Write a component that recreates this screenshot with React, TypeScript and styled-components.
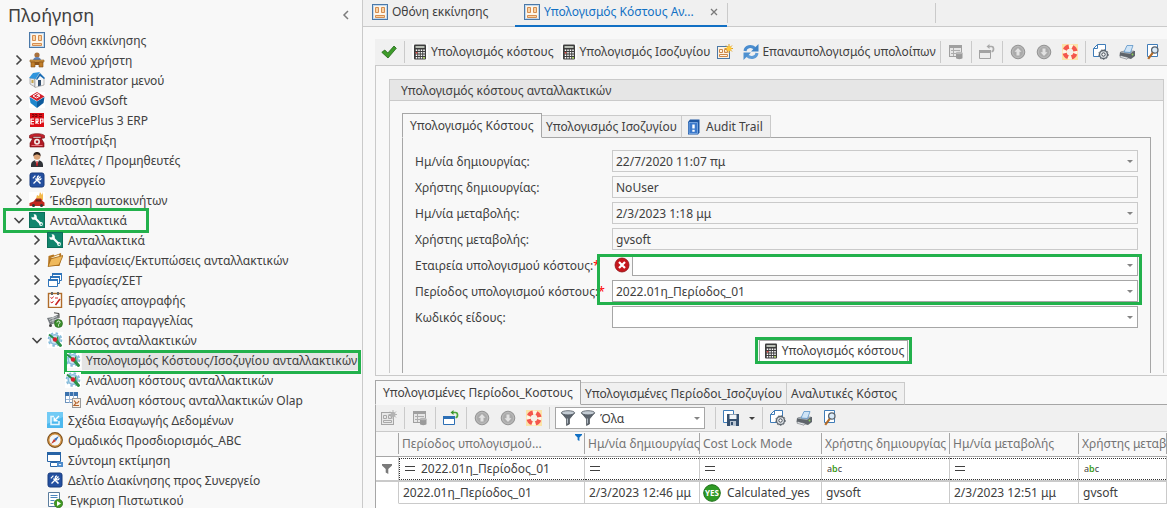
import React, { ReactNode } from "react";
import styled, { createGlobalStyle, css } from "styled-components";

const GREEN = "#22b14c";
const LINE = "#cacaca";
const DARK_LINE = "#a6a6a6";

const GlobalStyle = createGlobalStyle`
  * { box-sizing: border-box; }
  html, body, #root { height: 100%; }
  body {
    margin: 0;
    overflow: hidden;
    background: #f8f8f8;
    color: #404040;
    font-family: "Noto Sans", "Open Sans", sans-serif;
    font-size: 12px;
    line-height: 20px;
  }
  button, input, select { font: inherit; color: inherit; }
  svg { display: block; flex: none; }
`;

/* ---------- icons ---------- */

const Svg = ({ children, size = 16 }: { children: ReactNode; size?: number }) => (
  <svg width={size} height={size} viewBox="0 0 16 16" aria-hidden="true">
    {children}
  </svg>
);

const HomeScreenIcon = () => (
  <Svg>
    <rect x="0.5" y="0.5" width="15" height="15" fill="#fdf6ea" stroke="#4a78a8" />
    <rect x="1.5" y="1.5" width="13" height="13" fill="none" stroke="#c3d8ec" />
    <path d="M3.500 3.500h3v5h-3zM9.500 3.500h3v5h-3zM3.500 11.500h9v2h-9z" fill="#f9d3a4" stroke="#d58d51" />
  </Svg>
);
const DeskIcon = () => (
  <Svg>
    <circle cx="8" cy="3" r="2.6" fill="#a8703c" />
    <path d="M4 9c0-3 2-4 4-4s4 1 4 4z" fill="#5c82ba" />
    <path d="M1 8h14v2H1z" fill="#d79a45" stroke="#8c5a1c" strokeWidth=".6" />
    <path d="M2 10h4v5H2zM10 10h4v5h-4z" fill="#c07d28" stroke="#7d4c12" strokeWidth=".6" />
    <path d="M6 10h4v3H6z" fill="#8c5418" />
  </Svg>
);
const HouseIcon = () => (
  <Svg>
    <path d="M1 6l5 1v8l-5-3z" fill="#e6e6e6" stroke="#777" strokeWidth=".5" />
    <path d="M6 7l4-5 5 4v7l-9 2.500z" fill="#f7f7f7" stroke="#777" strokeWidth=".5" />
    <path d="M0 6l4-5 7-1-4.500 7z" fill="#2f95dd" />
    <path d="M7 7l4-6 5 5-1 1-4-3-3 4z" fill="#1a6cb5" />
    <path d="M9 8h3v5.500l-3 .8z" fill="#35506e" />
    <path d="M2.500 8h2v3h-2z" fill="#c8a64b" />
  </Svg>
);
const CubeIcon = () => (
  <Svg>
    <path d="M0 0h16v16H0z" fill="#fff" />
    <path d="M8 0l7.500 4.500L8 9 .5 4.500z" fill="#d3202c" />
    <path d="M.5 5L8 9.500V16L1.500 11z" fill="#1f86cc" />
    <path d="M15.500 5L8 9.500V16l6.500-5z" fill="#0e5b9c" />
    <path d="M10.500 2.800L8 1.500 4 4l3.500 2L11 4 9 3.200 7.500 4" fill="none" stroke="#fff" />
  </Svg>
);
const ErpIcon = () => (
  <Svg>
    <rect x="1" y="1" width="14" height="14" fill="#dc0d15" />
    <path d="M3 2.500h2v2H3M6 2.500h2v2H6M10 2.500h3M10 4.500h3" stroke="#7b0509" fill="none" />
    <path d="M5 7H2v5h3M2 9.500h3M7 12V7h2v2.500H7.500L9.500 12M11.500 12V7h2.500v3h-2" stroke="#fff" fill="none" strokeWidth="1.200" />
  </Svg>
);
const PhoneIcon = () => (
  <Svg>
    <path d="M.5 6V3.500C3 1 13 1 15.500 3.500V6l-3.500.5V4.500H4v2z" fill="#c3202b" stroke="#6e0d13" strokeWidth=".6" />
    <path d="M4 6h8l3 5v4H1v-4z" fill="#b01a24" stroke="#6e0d13" strokeWidth=".6" />
    <circle cx="8" cy="9.800" r="3" fill="#f4e7e4" />
    <circle cx="8" cy="9.800" r="1.300" fill="#9c1720" />
    <path d="M2.500 13.500h11" stroke="#e8757c" />
  </Svg>
);
const PersonIcon = () => (
  <Svg>
    <path d="M2 15c-.5-5 2-7 6-7s6.500 2 6 7z" fill="#2f3338" />
    <path d="M6 8l2 5 2-5z" fill="#fff" />
    <path d="M7.500 9h1l.6 4-1.100 1.500L7 13z" fill="#c31b22" />
    <circle cx="8" cy="4.500" r="3.300" fill="#dba477" />
    <path d="M4.400 4.500C4 1 6 0 8 0s4 1 3.600 4.500C11 3 9 2.500 8 2.500s-3 .5-3.600 2z" fill="#2e2019" />
  </Svg>
);
const ToolsIcon = () => (
  <Svg>
    <rect x="1" y="1" width="14" height="14" rx="2" fill="#2450a0" stroke="#173a7d" />
    <path d="M4.500 11.500l7-7" stroke="#fff" strokeWidth="1.300" />
    <path d="M6.500 6.500l5 5" stroke="#fff" strokeWidth="1.600" />
    <path d="M10 3.800a2 2 0 1 0 2.200 2.300M3.800 6.300l2.600-2.600" stroke="#fff" strokeWidth="1.200" fill="none" />
  </Svg>
);
const CarIcon = () => (
  <Svg>
    <path d="M0 0h16v16H0z" fill="#fff" />
    <path d="M7 7l1-4 2 1 1-4 2 3 1-3v8H7z" fill="#f3b94c" />
    <path d="M.5 11l4-1.500L7 6.500h5l2 3 1.500 1V14H.5z" fill="#c2281f" />
    <path d="M7.500 7.500h4l1 2H6z" fill="#5a2622" />
    <circle cx="4.500" cy="13.500" r="1.500" fill="#333" />
    <circle cx="12.500" cy="13.500" r="1.500" fill="#333" />
  </Svg>
);
const WrenchIcon = () => (
  <Svg>
    <rect x="0.500" y="0.500" width="15" height="15" fill="#12856d" stroke="#0c6e59" />
    <path d="M5.500 5.500l6 6" stroke="#fff" strokeWidth="2.200" strokeLinecap="round" />
    <path d="M4.500 2.500a2.700 2.700 0 1 1-2 2.200l2 1 1.200-1.200z" fill="#fff" />
    <circle cx="12" cy="12" r="1.900" fill="#fff" />
    <circle cx="12.300" cy="12.300" r=".8" fill="#12856d" />
  </Svg>
);
const FolderIcon = () => (
  <Svg>
    <path d="M1 14L1.500 4l5-1.500 1 1L14 1l.5 5-2 8z" fill="#b77620" />
    <path d="M3.500 6l8.500-3.500 1 3z" fill="#fff4da" />
    <path d="M1 14.500L4 6.800l12-3.300-4 9.500z" fill="#efb95c" stroke="#a3681b" strokeWidth=".8" />
  </Svg>
);
const WindowsIcon = () => (
  <Svg>
    <path d="M5.500 1.500h9v7h-9z" fill="#fff" stroke="#2f74ba" />
    <path d="M5 1h10v2H5z" fill="#2f74ba" />
    <path d="M3.500 4.500h9v7h-9z" fill="#fff" stroke="#2f74ba" />
    <path d="M3 4h10v2H3z" fill="#2f74ba" />
    <path d="M1.500 7.500h9v7h-9z" fill="#fff" stroke="#2f74ba" />
    <path d="M1 7h10v2H1z" fill="#2f74ba" />
  </Svg>
);
const ClipboardIcon = () => (
  <Svg>
    <rect x="1.500" y="1.500" width="13" height="14" fill="#fff" stroke="#b06c2a" strokeWidth="1.400" />
    <path d="M4 0h2v3H4zM10 0h2v3h-2z" fill="#666" />
    <path d="M3.500 5.500l1.500 1 1.500-2M3.500 10l1.500 1 1.500-2M8 6h3" stroke="#d42a2a" fill="none" />
    <path d="M13 7l-4.500 6" stroke="#c72020" strokeWidth="1.600" />
  </Svg>
);
const CartHelpIcon = () => (
  <Svg>
    <path d="M0 6l6-1 6-3-1 8-8 3z" fill="#777c80" />
    <path d="M2 7.500l8-3M3 9.500l8-3M6 5v6" stroke="#d2d5d7" strokeWidth=".8" />
    <path d="M12 6V1.500L7 .8" stroke="#444" fill="none" />
    <circle cx="3.500" cy="13.500" r="1.500" fill="#444" />
    <circle cx="11.500" cy="11.500" r="4" fill="#3c8f2c" stroke="#21621a" strokeWidth=".6" />
    <path d="M10 10.500c0-2 3-2 3 0 0 1-1.500 1-1.500 2M11.500 13.300v1" stroke="#fff" fill="none" />
  </Svg>
);
const GearWrenchIcon = () => (
  <Svg>
    <path d="M0 0h16v16H0z" fill="#fff" />
    <circle cx="8" cy="7.500" r="4.800" fill="#cfe8f5" stroke="#86bbda" strokeWidth="1.600" />
    <circle cx="8" cy="7.500" r="6.400" fill="none" stroke="#86bbda" strokeWidth="1.800" strokeDasharray="2.500 2.500" />
    <path d="M2 2.500l5 4" stroke="#258f47" strokeWidth="2" />
    <path d="M9.500 9l4 4.500" stroke="#2b9146" strokeWidth="3" strokeLinecap="round" />
    <path d="M10.500 4.500L11 9" stroke="#2b9146" strokeWidth="1.400" fill="none" />
    <circle cx="8" cy="7.500" r="2.200" fill="#d8222f" />
  </Svg>
);
const OlapIcon = () => (
  <Svg>
    <rect x="0.500" y="0.500" width="12" height="10" fill="#fff" stroke="#6d93bd" />
    <path d="M0 0h13v4H0z" fill="#3b72ae" />
    <path d="M1 7.500h12M4.500 0v11M8.500 0v11" stroke="#9db8d8" />
    <rect x="7.500" y="6.500" width="8" height="9" fill="#fbeee0" stroke="#9a9a9a" />
    <path d="M9 8.500l2 2.500-2 2.500h5M10.500 11h2l1.500-2" stroke="#b2622c" fill="none" strokeWidth="1.200" />
  </Svg>
);
const ImportIcon = () => (
  <Svg>
    <rect width="16" height="16" fill="#4db8ee" />
    <path d="M0 0h16v5L0 12z" fill="#72cbf5" />
    <path d="M7 4.500H4v8h8V9" stroke="#e9f7fe" fill="none" strokeWidth="1.500" />
    <path d="M12 4L8 8M7.300 5.500v3.300h3.300" stroke="#fff" fill="none" strokeWidth="1.400" />
  </Svg>
);
const CompassIcon = () => (
  <Svg>
    <circle cx="8" cy="8" r="7" fill="#f3f6f8" stroke="#7c4e1a" strokeWidth="1.800" />
    <circle cx="8" cy="8" r="6.200" fill="none" stroke="#d99a4a" strokeWidth="1.300" />
    <path d="M12 4L7 7l2 2z" fill="#2f6fbf" />
    <path d="M4 12l3-5 2 2z" fill="#c8382d" />
  </Svg>
);
const FormIcon = () => (
  <Svg>
    <path d="M.5.500h13v9H.5z" fill="#fff" stroke="#2864a6" />
    <path d="M0 0h14v3H0z" fill="#2864a6" />
    <path d="M3.500 10.500h12v4h-12z" fill="#fff" stroke="#2864a6" />
    <path d="M10 10h6v5h-6z" fill="#4d8bcc" />
    <path d="M11.500 12h3L13 13.500z" fill="#fff" />
  </Svg>
);
const DocRunIcon = () => (
  <Svg>
    <path d="M1.500.5h11v14h-11z" fill="#fff" stroke="#5b7d9e" />
    <path d="M3.500 3.500h7M3.500 5.500h7M3.500 8.500h4M3.500 11.500h3" stroke="#4d86bd" />
    <circle cx="11.500" cy="11.500" r="4.200" fill="#3f9a21" stroke="#255f13" strokeWidth=".6" />
    <path d="M10 9l4 2.500L10 14z" fill="#fff" />
  </Svg>
);
const CheckIcon = () => (
  <Svg>
    <path d="M.8 8.300l3-2.300 3 3L13 2l2.300 2.300L7 14z" fill="#3e9c2a" stroke="#1f6415" strokeWidth=".8" />
  </Svg>
);
const CalculatorIcon = () => (
  <Svg>
    <path d="M0 0h16v16H0z" fill="#fcfcfc" />
    <rect x="2" y="0.500" width="12" height="15" rx="1" fill="#3c3c3c" />
    <rect x="3.500" y="2" width="9" height="2" fill="#b9beb5" />
    <path d="M4.500 5.500v9M7 5.500v9M9.500 5.500v9M12 5.500v9" stroke="#fff" strokeWidth="1.500" strokeDasharray="1.500 1" />
    <path d="M3.800 8h1.500v1.500H3.800z" fill="#e1403a" />
    <path d="M11.300 13h1.500v1.500h-1.500z" fill="#a5d63f" />
  </Svg>
);
const NewIcon = ({ muted = false }: { muted?: boolean }) => (
  <Svg>
    <rect x="0.500" y="2.500" width="12" height="12" fill={muted ? "#e8e8e8" : "#fdf3e4"} stroke={muted ? "#a5a5a5" : "#4b78a6"} />
    <path d="M2.500 5.500h3v3h-3zM7.500 5.500h3v3h-3zM2.500 10.500h8v2h-8z" fill="none" stroke={muted ? "#a8a8a8" : "#cc8749"} />
    <path d="M12 0v9M7.500 4.500h8.500M9 1.500l6 6M15 1.500l-6 6" stroke={muted ? "#b3b3b3" : "#dda024"} />
    <circle cx="12" cy="4.500" r="2.500" fill={muted ? "#b3b3b3" : "#ffc83a"} />
  </Svg>
);
const RefreshIcon = () => (
  <Svg>
    <path d="M2 7C2.500 2.500 8 1 12 4.500" stroke="#4a8dcf" strokeWidth="3" fill="none" />
    <path d="M15.500 0v7.500H8z" fill="#3f83c6" />
    <path d="M14 9c-.5 4.500-6 6-10 2.500" stroke="#5c9bd7" strokeWidth="3" fill="none" />
    <path d="M.5 16V8.500H8z" fill="#4d90d0" />
  </Svg>
);
const SaveRecordIcon = () => (
  <Svg>
    <rect x="1.500" y="1.500" width="12" height="11" fill="#e6e6e6" stroke="#a0a0a0" />
    <path d="M1 1h13v3H1z" fill="#a0a0a0" />
    <path d="M3 6.500h9M3 9.500h9M5.500 4v8" stroke="#adadad" />
    <path d="M8 9v5c0 1.500 6.500 1.500 6.500 0V9z" fill="#9a9a9a" />
    <ellipse cx="11.200" cy="9" rx="3.300" ry="1.200" fill="#b8b8b8" />
  </Svg>
);
const RestoreIcon = ({ muted = false }: { muted?: boolean }) => {
  const frame = muted ? "#a2a2a2" : "#2c6fb5";
  return (
    <Svg>
      <path d="M.5 6.500h11v8H.5z" fill={muted ? "#ebebeb" : "#fff"} stroke={frame} />
      <path d="M0 6h12v3H0z" fill={frame} />
      <path d="M9 2.500h3.500c2.700 0 2.700 5 0 5" stroke={muted ? "#a9a9a9" : "#4da83a"} strokeWidth="1.700" fill="none" />
      <path d="M10.500 0v5l-3-2.500z" fill={muted ? "#a9a9a9" : "#3a9229"} />
    </Svg>
  );
};
const ArrowCircleIcon = ({ down = false }: { down?: boolean }) => (
  <Svg>
    <circle cx="8" cy="8" r="6.800" fill="#aaa" stroke="#949494" />
    <circle cx="8" cy="8" r="5.500" fill="none" stroke="#bcbcbc" />
    <path
      d={down ? "M8 12L4.500 8.200h2V4.500h3v3.700h2z" : "M8 4l3.500 3.800h-2v3.700h-3V7.800h-2z"}
      fill="#e2e2e2"
    />
  </Svg>
);
const LifeRingIcon = () => (
  <Svg>
    <rect width="16" height="16" fill="#fbe3a8" />
    <circle cx="8" cy="8" r="5.500" fill="none" stroke="#fff6e2" strokeWidth="4" />
    <circle cx="8" cy="8" r="5.500" fill="none" stroke="#f4574c" strokeWidth="4.200" strokeDasharray="5 3.640" strokeDashoffset="-1.800" />
    <circle cx="8" cy="8" r="3.200" fill="#f4f0ea" />
  </Svg>
);
const PageSetupIcon = () => (
  <Svg>
    <path d="M4.500.5h8v12h-12v-8z" fill="#fff" stroke="#3f7cb8" />
    <path d="M4.500.5v4h-4" fill="none" stroke="#3f7cb8" />
    <circle cx="10.500" cy="10.500" r="4" fill="#e2e6ea" stroke="#5c646c" strokeWidth="1.300" />
    <circle cx="10.500" cy="10.500" r="4.800" fill="none" stroke="#5c646c" strokeDasharray="1.600 1.600" />
    <circle cx="10.500" cy="10.500" r="1.700" fill="#fff" stroke="#444c54" />
  </Svg>
);
const PrinterIcon = () => (
  <Svg>
    <path d="M1 8l3-1h9l3 0v5l-4 3L.5 12z" fill="#5f656b" />
    <path d="M1 8.500l4-2h10.500l-4.500 3.500z" fill="#a5abb1" />
    <path d="M5 8l3-6.500h6L11.500 8.500z" fill="#cfe4f6" stroke="#5b93c6" strokeWidth=".8" />
    <path d="M1.500 11.500l8 2-1.500 1.700-7-2z" fill="#e9ecef" stroke="#50565c" strokeWidth=".5" />
    <circle cx="13.500" cy="10.500" r=".9" fill="#8bd253" />
  </Svg>
);
const PreviewIcon = () => (
  <Svg>
    <path d="M2.500 .5h10v12h-10z" fill="#fff" stroke="#3f7cb8" />
    <circle cx="9.800" cy="6" r="3.200" fill="#d9ebfa" stroke="#59636e" strokeWidth="1.300" />
    <path d="M7.700 8.800l-4.500 6" stroke="#b26a26" strokeWidth="2.200" />
  </Svg>
);
const BookIcon = () => (
  <Svg>
    <path d="M2 3l2-2.500h9.500v13L12 15.500H2z" fill="#1d56a3" />
    <path d="M3 3.500h8.500v11H3z" fill="#3b79cc" stroke="#86b1e6" strokeWidth=".8" />
    <path d="M6.300 5.500h2.400v4H6.300zM6.300 10.800h2.400v2H6.300z" fill="#fff" />
  </Svg>
);
const ErrorIcon = () => (
  <Svg>
    <circle cx="8" cy="8" r="7" fill="#c5161c" stroke="#8c0f13" strokeWidth=".8" />
    <path d="M5 5l6 6M11 5l-6 6" stroke="#fff" strokeWidth="2.200" />
  </Svg>
);
const FunnelIcon = () => (
  <Svg>
    <path d="M1.500 3l5 6v6.500L9.500 14V9l5-6z" fill="#5b636c" stroke="#3f464e" strokeWidth=".6" />
    <ellipse cx="8" cy="2.800" rx="6.600" ry="2.100" fill="#c3cbd3" stroke="#4f575f" strokeWidth=".8" />
    <path d="M7.500 8.500v5" stroke="#aeb7c0" />
  </Svg>
);
const SaveLayoutIcon = () => (
  <Svg>
    <path d="M.5.500h10v12H.5z" fill="#fff" stroke="#3f7cb8" />
    <path d="M4 4h12v12H4z" fill="#35506f" />
    <path d="M6.500 4.500h7v4.500h-7z" fill="#f1f5f9" />
    <path d="M7 11h6v5H7z" fill="#b9c5d2" />
    <path d="M8 12h2v3H8z" fill="#35506f" />
  </Svg>
);
const YesIcon = () => (
  <svg width="18" height="18" viewBox="0 0 18 18" aria-hidden="true">
    <circle cx="9" cy="9" r="8.300" fill="#2f9a25" stroke="#1a6f14" />
    <text x="9" y="12" textAnchor="middle" fontSize="8" fontWeight="700" fill="#fff">
      YES
    </text>
  </svg>
);
const Chevron = ({ open }: { open?: boolean }) => (
  <svg width="12" height="12" viewBox="0 0 12 12" fill="none" stroke="#454545" strokeWidth="1.600" aria-hidden="true">
    <path d={open ? "M1.500 4L6 8.500 10.500 4" : "M3.500 1.500L8 6l-4.500 4.500"} />
  </svg>
);
const Caret = ({ dark = false }: { dark?: boolean }) => (
  <svg width="6" height="3" viewBox="0 0 6 3" aria-hidden="true">
    <path d="M0 0h6L3 3z" fill={dark ? "#404040" : "#848484"} />
  </svg>
);
const SmallFunnel = ({ color, size }: { color: string; size: number }) => (
  <svg width={size} height={size} viewBox="0 0 10 10" aria-hidden="true">
    <path d="M0 0h10v1.500L6.300 5v5L3.700 8.500V5L0 1.500z" fill={color} />
  </svg>
);

/* ---------- shell ---------- */

const Shell = styled.div`
  display: flex;
  height: 100%;
  overflow: hidden;
`;
const Sidebar = styled.nav`
  flex: 0 0 363px;
  border-right: 1px solid ${LINE};
  overflow: hidden;
`;
const SidebarHeader = styled.header`
  display: flex;
  align-items: center;
  justify-content: space-between;
  height: 30px;
  padding: 0 12px 0 8px;
`;
const SidebarTitle = styled.h1`
  margin: 0;
  font-size: 18px;
  font-weight: 400;
  line-height: 28px;
`;
const PlainButton = styled.button`
  display: flex;
  align-items: center;
  justify-content: center;
  padding: 0;
  border: 0;
  background: none;
`;
const Tree = styled.ul`
  margin: 0;
  padding: 0;
  list-style: none;
`;
const TreeRow = styled.li<{ $level: number }>`
  display: flex;
  align-items: center;
  height: 20px;
  padding-left: ${(p) => 11 + p.$level * 18}px;
`;
const TreeToggle = styled(PlainButton)`
  flex: none;
  width: 16px;
  height: 20px;
`;
const TreeLink = styled.a<{ $selected?: boolean }>`
  position: relative;
  display: flex;
  align-items: center;
  gap: 1px;
  margin-left: 2px;
  color: inherit;
  text-decoration: none;
  white-space: nowrap;
  ${(p) =>
    p.$selected &&
    css`
      flex: 1;
      min-width: 0;
      margin-right: 4px;
    `}
`;
const TreeLabel = styled.span<{ $selected?: boolean }>`
  flex: ${(p) => (p.$selected ? 1 : "none")};
  min-width: 0;
  padding: 2px 4px 0;
  line-height: 18px;
  background: ${(p) => (p.$selected ? "#e4e4e4" : "none")};
`;
const Mark = styled.span<{ $left: number; $right: number; $top: number; $bottom: number }>`
  position: absolute;
  left: ${(p) => p.$left}px;
  right: ${(p) => p.$right}px;
  top: ${(p) => p.$top}px;
  bottom: ${(p) => p.$bottom}px;
  border: 3px solid ${GREEN};
  pointer-events: none;
`;

const Main = styled.main`
  display: flex;
  flex: 1;
  flex-direction: column;
  min-width: 0;
`;
const DocTabs = styled.div`
  display: flex;
  flex: none;
  height: 27px;
  background: #f0f0f0;
  border-bottom: 1px solid ${LINE};
`;
const DocTab = styled.div<{ $active?: boolean; $width: number }>`
  display: flex;
  align-items: center;
  width: ${(p) => p.$width}px;
  height: 27px;
  padding: 0 9px ${(p) => (p.$active ? 1 : 3)}px;
  color: ${(p) => (p.$active ? "#1270c4" : "inherit")};
  border-bottom: ${(p) => (p.$active ? "2px solid #1270c4" : "0")};
  button:first-of-type { flex: 1; min-width: 0; }
`;
const DocTabLabel = styled(PlainButton)`
  justify-content: flex-start;
  gap: 4px;
  white-space: nowrap;
`;
const TabDivider = styled.span`
  width: 1px;
  height: 20px;
  margin-top: 3px;
  background: ${LINE};
`;
const Ellipsis = styled.span`
  overflow: hidden;
  text-overflow: ellipsis;
`;

/* ---------- toolbars ---------- */

const Toolbar = styled.div`
  display: flex;
  flex: none;
  align-items: center;
  height: 27px;
  padding-left: 1px;
  background: #f0f0f0;
  border-bottom: 1px solid ${LINE};
  overflow: hidden;
`;
const ToolButton = styled.button<{ $text?: boolean }>`
  display: flex;
  flex: none;
  align-items: center;
  gap: 3px;
  height: 24px;
  padding: 0 ${(p) => (p.$text ? 2 : 5)}px 0 5px;
  border: 0;
  background: none;
  white-space: nowrap;
`;
const ToolDivider = styled.span`
  flex: none;
  width: 1px;
  height: 22px;
  margin: 0 2px;
  background: ${LINE};
`;

/* ---------- form ---------- */

const Content = styled.div`
  display: flex;
  flex: 1;
  flex-direction: column;
  min-height: 0;
  padding: 12px 0 0 12px;
`;
const FormFrame = styled.section`
  flex: none;
  padding: 13px 3px 2px 13px;
  border: 1px solid ${LINE};
  border-width: 0 0 1px 1px;
`;
const Group = styled.div`
  border: 1px solid ${LINE};
  border-bottom: 0;
`;
const GroupTitle = styled.h2`
  margin: 0;
  padding: 0 11px;
  height: 21px;
  font-size: 12px;
  font-weight: 400;
  line-height: 21px;
  background: #e6e6e6;
  border-bottom: 1px solid ${LINE};
`;
const GroupBody = styled.div`
  padding: 12px 12px 0;
`;
const TabStrip = styled.div`
  display: flex;
  flex: none;
  align-items: flex-end;
  height: 25px;
  box-shadow: inset 0 -1px 0 ${DARK_LINE};
`;
const StripTab = styled.button<{ $active?: boolean; $width: number }>`
  display: flex;
  align-items: center;
  gap: 4px;
  width: ${(p) => p.$width}px;
  height: ${(p) => (p.$active ? 25 : 23)}px;
  padding: 0 0 0 ${(p) => (p.$active ? 7 : 4)}px;
  white-space: nowrap;
  background: ${(p) => (p.$active ? "#f8f8f8" : "#f0f0f0")};
  border: 1px solid ${(p) => (p.$active ? DARK_LINE : LINE)};
  border-left-width: ${(p) => (p.$active ? 1 : 0)}px;
  border-bottom-color: ${(p) => (p.$active ? "#f8f8f8" : DARK_LINE)};
`;
const TabPage = styled.div`
  display: flex;
  flex-direction: column;
  gap: 4px;
  padding: 12px 12px 11px;
  border: 1px solid ${DARK_LINE};
  border-width: 0 1px;
`;
const FormRow = styled.div`
  display: grid;
  grid-template-columns: 197px 1fr;
  align-items: center;
`;
const Label = styled.label`
  padding-top: 2px;
  white-space: nowrap;
`;
const Required = styled.span`
  color: #f00;
`;
const FieldLine = styled.div`
  display: flex;
  align-items: center;
  padding-left: 2px;
  gap: 2px;
`;
const Field = styled.div<{ $readOnly?: boolean }>`
  position: relative;
  display: flex;
  flex: 1;
  height: 22px;
  background: ${(p) => (p.$readOnly ? "#f8f8f8" : "#fff")};
  border: 1px solid ${(p) => (p.$readOnly ? LINE : DARK_LINE)};
`;
const fieldControl = css`
  width: 100%;
  height: 20px;
  padding: 1px 3px 0;
  border: 0;
  outline: 0;
  background: none;
`;
const TextInput = styled.input`
  ${fieldControl}
`;
const Select = styled.select`
  ${fieldControl}
  appearance: none;
`;
const FieldArrow = styled.span`
  position: absolute;
  top: 9px;
  right: 4px;
  pointer-events: none;
`;
const MarkedRows = styled.div`
  position: relative;
  display: flex;
  flex-direction: column;
  gap: 4px;
`;
const ActionRow = styled.div`
  display: flex;
  justify-content: center;
  padding: 8px 0 0 114px;
`;
const ActionWrap = styled.div`
  position: relative;
`;
const ActionButton = styled.button`
  display: flex;
  align-items: center;
  gap: 3px;
  height: 22px;
  padding: 0 3px;
  background: #fff;
  border: 1px solid ${DARK_LINE};
  white-space: nowrap;
`;

/* ---------- details ---------- */

const Details = styled.section`
  display: flex;
  flex: 1;
  flex-direction: column;
  min-height: 0;
  margin-top: 4px;
`;
const DetailsBody = styled.div`
  flex: 1;
  background: #fff;
  border-left: 1px solid ${DARK_LINE};
  overflow: hidden;
  ${Toolbar} { padding-left: 0; }
`;
const FilterPicker = styled(Field)`
  flex: 0 0 150px;
  align-items: center;
  gap: 4px;
  margin: 0 8px 0 3px;
  padding-left: 4px;
  ${Select} { padding: 1px 0 0; }
`;
const Grid = styled.table`
  width: 100%;
  table-layout: fixed;
  border-collapse: separate;
  border-spacing: 0;
`;
const HeadCell = styled.th`
  height: 25px;
  padding: 2px 3px;
  font-weight: 400;
  line-height: 20px;
  text-align: left;
  white-space: nowrap;
  color: #747474;
  background:
    linear-gradient(${DARK_LINE}, ${DARK_LINE}) right 1px / 1px 21px no-repeat,
    #f8f8f8;
  border-bottom: 1px solid ${DARK_LINE};
  overflow: hidden;
`;
const HeadInner = styled.div`
  display: flex;
  justify-content: space-between;
  align-items: flex-start;
`;
const Cell = styled.td<{ $filter?: boolean }>`
  height: ${(p) => (p.$filter ? 25 : 22)}px;
  padding: 0 4px;
  line-height: 20px;
  white-space: nowrap;
  background: #fff;
  border-right: 1px solid ${LINE};
  border-bottom: ${(p) => (p.$filter ? 2 : 1)}px solid ${LINE};
  overflow: hidden;
  &:first-child { border-bottom-color: ${(p) => (p.$filter ? LINE : "#fff")}; }
`;
const FilterCell = styled(Cell)`
  padding: 0;
`;
const FilterInner = styled.div<{ $first?: boolean }>`
  display: flex;
  align-items: center;
  gap: 6px;
  height: 22px;
  padding: 1px 0 0 5px;
  border: 1px dotted #333;
  border-width: 1px 0 1px ${(p) => (p.$first ? 1 : 0)}px;
`;
const Indicator = styled.div`
  display: flex;
  justify-content: center;
`;
const IconText = styled.div`
  display: flex;
  align-items: center;
  gap: 6px;
  margin-left: -1px;
`;
const EqualsSign = () => (
  <svg width="10" height="6" viewBox="0 0 10 6" aria-label="=">
    <path d="M0 .5h10M0 4.500h10" stroke="#404040" />
  </svg>
);
const Abc = styled.span`
  font-size: 9px;
  b {
    color: #3a9d14;
    font-weight: 600;
  }
`;

/* ---------- data ---------- */

type Node = {
  label: string;
  level: number;
  icon: ReactNode;
  state?: "open" | "closed";
  mark?: "group" | "item";
};

const nodes: Node[] = [
  { label: "Οθόνη εκκίνησης", level: 0, icon: <HomeScreenIcon /> },
  { label: "Μενού χρήστη", level: 0, icon: <DeskIcon />, state: "closed" },
  { label: "Administrator μενού", level: 0, icon: <HouseIcon />, state: "closed" },
  { label: "Μενού GvSoft", level: 0, icon: <CubeIcon />, state: "closed" },
  { label: "ServicePlus 3 ERP", level: 0, icon: <ErpIcon />, state: "closed" },
  { label: "Υποστήριξη", level: 0, icon: <PhoneIcon />, state: "closed" },
  { label: "Πελάτες / Προμηθευτές", level: 0, icon: <PersonIcon />, state: "closed" },
  { label: "Συνεργείο", level: 0, icon: <ToolsIcon />, state: "closed" },
  { label: "Έκθεση αυτοκινήτων", level: 0, icon: <CarIcon />, state: "closed" },
  { label: "Ανταλλακτικά", level: 0, icon: <WrenchIcon />, state: "open", mark: "group" },
  { label: "Ανταλλακτικά", level: 1, icon: <WrenchIcon />, state: "closed" },
  { label: "Εμφανίσεις/Εκτυπώσεις ανταλλακτικών", level: 1, icon: <FolderIcon />, state: "closed" },
  { label: "Εργασίες/ΣΕΤ", level: 1, icon: <WindowsIcon />, state: "closed" },
  { label: "Εργασίες απογραφής", level: 1, icon: <ClipboardIcon />, state: "closed" },
  { label: "Πρόταση παραγγελίας", level: 1, icon: <CartHelpIcon /> },
  { label: "Κόστος ανταλλακτικών", level: 1, icon: <GearWrenchIcon />, state: "open" },
  { label: "Υπολογισμός Κόστους/Ισοζυγίου ανταλλακτικών", level: 2, icon: <GearWrenchIcon />, mark: "item" },
  { label: "Ανάλυση κόστους ανταλλακτικών", level: 2, icon: <GearWrenchIcon /> },
  { label: "Ανάλυση κόστους ανταλλακτικών Olap", level: 2, icon: <OlapIcon /> },
  { label: "Σχέδια Εισαγωγής Δεδομένων", level: 1, icon: <ImportIcon /> },
  { label: "Ομαδικός Προσδιορισμός_ABC", level: 1, icon: <CompassIcon /> },
  { label: "Σύντομη εκτίμηση", level: 1, icon: <FormIcon /> },
  { label: "Δελτίο Διακίνησης προς Συνεργείο", level: 1, icon: <ToolsIcon /> },
  { label: "Έγκριση Πιστωτικού", level: 1, icon: <DocRunIcon /> },
];

const auditFields = [
  { id: "created", label: "Ημ/νία δημιουργίας:", value: "22/7/2020 11:07 πμ", arrow: true },
  { id: "creator", label: "Χρήστης δημιουργίας:", value: "NoUser" },
  { id: "changed", label: "Ημ/νία μεταβολής:", value: "2/3/2023 1:18 μμ", arrow: true },
  { id: "changer", label: "Χρήστης μεταβολής:", value: "gvsoft" },
];

const columns = [
  { title: "Περίοδος υπολογισμού...", width: 186, filter: "eq", filterText: "2022.01η_Περίοδος_01", value: "2022.01η_Περίοδος_01" },
  { title: "Ημ/νία δημιουργίας", width: 115, filter: "eq", value: "2/3/2023 12:46 μμ" },
  { title: "Cost Lock Mode", width: 122, filter: "eq", value: "Calculated_yes" },
  { title: "Χρήστης δημιουργίας", width: 128, filter: "abc", value: "gvsoft" },
  { title: "Ημ/νία μεταβολής", width: 129, filter: "eq", value: "2/3/2023 12:51 μμ" },
  { title: "Χρήστης μεταβολής", filter: "abc", value: "gvsoft" },
];

/* ---------- parts ---------- */

const Arrow = () => (
  <FieldArrow>
    <Caret />
  </FieldArrow>
);

const IconButton = ({ label, children }: { label: string; children: ReactNode }) => (
  <ToolButton type="button" aria-label={label}>
    {children}
  </ToolButton>
);

const NavigationTree = () => (
  <Sidebar aria-label="Πλοήγηση">
    <SidebarHeader>
      <SidebarTitle>Πλοήγηση</SidebarTitle>
      <PlainButton type="button" aria-label="Σύμπτυξη">
        <svg width="8" height="10" viewBox="0 0 8 10" fill="none" stroke="#7d7d7d" strokeWidth="1.500">
          <path d="M6 1L2 5l4 4" />
        </svg>
      </PlainButton>
    </SidebarHeader>
    <Tree>
      {nodes.map((n, i) => (
        <TreeRow key={i} $level={n.level}>
          <TreeToggle type="button" aria-label={n.label} aria-expanded={n.state === "open"}>
            {n.state && <Chevron open={n.state === "open"} />}
          </TreeToggle>
          <TreeLink href="#" $selected={n.mark === "item"}>
            {n.icon}
            <TreeLabel $selected={n.mark === "item"}>{n.label}</TreeLabel>
            {n.mark === "group" && <Mark $left={-26} $right={-18} $top={-2} $bottom={-3} />}
            {n.mark === "item" && <Mark $left={-1} $right={-3} $top={0} $bottom={-4} />}
          </TreeLink>
        </TreeRow>
      ))}
    </Tree>
  </Sidebar>
);

const CostForm = () => (
  <FormFrame>
    <Group>
      <GroupTitle>Υπολογισμός κόστους ανταλλακτικών</GroupTitle>
      <GroupBody>
        <TabStrip>
          <StripTab type="button" $active $width={140}>
            Υπολογισμός Κόστους
          </StripTab>
          <StripTab type="button" $width={140}>
            Υπολογισμός Ισοζυγίου
          </StripTab>
          <StripTab type="button" $width={89}>
            <BookIcon />
            Audit Trail
          </StripTab>
        </TabStrip>
        <TabPage>
          {auditFields.map((f) => (
            <FormRow key={f.id}>
              <Label htmlFor={f.id}>{f.label}</Label>
              <Field $readOnly>
                <TextInput id={f.id} value={f.value} readOnly />
                {f.arrow && <Arrow />}
              </Field>
            </FormRow>
          ))}
          <MarkedRows>
            <FormRow>
              <Label htmlFor="company">
                Εταιρεία υπολογισμού κόστους:<Required>*</Required>
              </Label>
              <FieldLine>
                <ErrorIcon />
                <Field>
                  <Select id="company" defaultValue="">
                    <option value=""></option>
                  </Select>
                  <Arrow />
                </Field>
              </FieldLine>
            </FormRow>
            <FormRow>
              <Label htmlFor="period">
                Περίοδος υπολογισμού κόστους:<Required>*</Required>
              </Label>
              <Field>
                <Select id="period">
                  <option>2022.01η_Περίοδος_01</option>
                </Select>
                <Arrow />
              </Field>
            </FormRow>
            <Mark $left={182} $right={-4} $top={0} $bottom={-3} />
          </MarkedRows>
          <FormRow>
            <Label htmlFor="item">Κωδικός είδους:</Label>
            <Field>
              <Select id="item" defaultValue="">
                <option value=""></option>
              </Select>
              <Arrow />
            </Field>
          </FormRow>
          <ActionRow>
            <ActionWrap>
              <ActionButton type="button">
                <CalculatorIcon />
                Υπολογισμός κόστους
              </ActionButton>
              <Mark $left={-4} $right={-4} $top={-3} $bottom={-2} />
            </ActionWrap>
          </ActionRow>
        </TabPage>
      </GroupBody>
    </Group>
  </FormFrame>
);

const PeriodsGrid = () => (
  <Grid>
    <colgroup>
      <col style={{ width: 23 }} />
      {columns.map((c) => (
        <col key={c.title} style={{ width: c.width }} />
      ))}
    </colgroup>
    <thead>
      <tr>
        <HeadCell />
        {columns.map((c, i) => (
          <HeadCell key={c.title}>
            <HeadInner>
              {c.title}
              {i === 0 && <SmallFunnel color="#1270c4" size={7} />}
            </HeadInner>
          </HeadCell>
        ))}
      </tr>
    </thead>
    <tbody>
      <tr>
        <Cell $filter>
          <Indicator>
            <SmallFunnel color="#7a7a7a" size={10} />
          </Indicator>
        </Cell>
        {columns.map((c, i) => (
          <FilterCell key={c.title} $filter>
            <FilterInner $first={i === 0}>
              {c.filter === "eq" ? (
                <EqualsSign />
              ) : (
                <Abc>
                  a<b>b</b>c
                </Abc>
              )}
              {c.filterText}
            </FilterInner>
          </FilterCell>
        ))}
      </tr>
      <tr>
        <Cell />
        {columns.map((c, i) => (
          <Cell key={c.title}>
            {i === 2 ? (
              <IconText>
                <YesIcon />
                {c.value}
              </IconText>
            ) : (
              c.value
            )}
          </Cell>
        ))}
      </tr>
    </tbody>
  </Grid>
);

export default function App() {
  return (
    <>
      <GlobalStyle />
      <Shell>
        <NavigationTree />
        <Main>
          <DocTabs>
            <DocTab $width={152}>
              <DocTabLabel type="button">
                <HomeScreenIcon />
                Οθόνη εκκίνησης
              </DocTabLabel>
            </DocTab>
            <DocTab $active $width={212}>
              <DocTabLabel type="button">
                <HomeScreenIcon />
                <Ellipsis>Υπολογισμός Κόστους Αν...</Ellipsis>
              </DocTabLabel>
              <PlainButton type="button" aria-label="Κλείσιμο">
                <svg width="8" height="8" viewBox="0 0 8 8" stroke="#7a7a7a" strokeWidth="1.300">
                  <path d="M1 1l6 6M7 1L1 7" />
                </svg>
              </PlainButton>
            </DocTab>
            <TabDivider />
            <DocTab $width={207} />
            <TabDivider />
          </DocTabs>
          <Content>
            <Toolbar>
              <IconButton label="OK"><CheckIcon /></IconButton>
              <ToolDivider />
              <ToolButton type="button" $text>
                <CalculatorIcon />
                Υπολογισμός κόστους
              </ToolButton>
              <ToolButton type="button" $text>
                <CalculatorIcon />
                Υπολογισμός Ισοζυγίου
              </ToolButton>
              <IconButton label="Νέο"><NewIcon /></IconButton>
              <ToolButton type="button" $text>
                <RefreshIcon />
                Επαναυπολογισμός υπολοίπων
              </ToolButton>
              <ToolDivider />
              <IconButton label="Αποθήκευση"><SaveRecordIcon /></IconButton>
              <ToolDivider />
              <IconButton label="Επαναφορά"><RestoreIcon muted /></IconButton>
              <ToolDivider />
              <IconButton label="Προηγούμενο"><ArrowCircleIcon /></IconButton>
              <IconButton label="Επόμενο"><ArrowCircleIcon down /></IconButton>
              <IconButton label="Βοήθεια"><LifeRingIcon /></IconButton>
              <ToolDivider />
              <IconButton label="Διαμόρφωση σελίδας"><PageSetupIcon /></IconButton>
              <IconButton label="Εκτύπωση"><PrinterIcon /></IconButton>
              <IconButton label="Προεπισκόπηση"><PreviewIcon /></IconButton>
            </Toolbar>
            <CostForm />
            <Details>
              <TabStrip>
                <StripTab type="button" $active $width={206}>
                  Υπολογισμένες Περίοδοι_Κοστους
                </StripTab>
                <StripTab type="button" $width={206}>
                  Υπολογισμένες Περίοδοι_Ισοζυγίου
                </StripTab>
                <StripTab type="button" $width={118}>
                  Αναλυτικές Κόστος
                </StripTab>
              </TabStrip>
              <DetailsBody>
                <Toolbar>
                  <IconButton label="Νέο"><NewIcon muted /></IconButton>
                  <ToolDivider />
                  <IconButton label="Αποθήκευση"><SaveRecordIcon /></IconButton>
                  <ToolDivider />
                  <IconButton label="Επαναφορά"><RestoreIcon /></IconButton>
                  <ToolDivider />
                  <IconButton label="Προηγούμενο"><ArrowCircleIcon /></IconButton>
                  <IconButton label="Επόμενο"><ArrowCircleIcon down /></IconButton>
                  <IconButton label="Βοήθεια"><LifeRingIcon /></IconButton>
                  <ToolDivider />
                  <FilterPicker>
                    <FunnelIcon />
                    <FunnelIcon />
                    <Select aria-label="Φίλτρο">
                      <option>Όλα</option>
                    </Select>
                    <Arrow />
                  </FilterPicker>
                  <ToolDivider />
                  <IconButton label="Αποθήκευση διάταξης"><SaveLayoutIcon /></IconButton>
                  <IconButton label="Επιλογές"><Caret dark /></IconButton>
                  <ToolDivider />
                  <IconButton label="Διαμόρφωση σελίδας"><PageSetupIcon /></IconButton>
                  <IconButton label="Εκτύπωση"><PrinterIcon /></IconButton>
                  <IconButton label="Προεπισκόπηση"><PreviewIcon /></IconButton>
                </Toolbar>
                <PeriodsGrid />
              </DetailsBody>
            </Details>
          </Content>
        </Main>
      </Shell>
    </>
  );
}
